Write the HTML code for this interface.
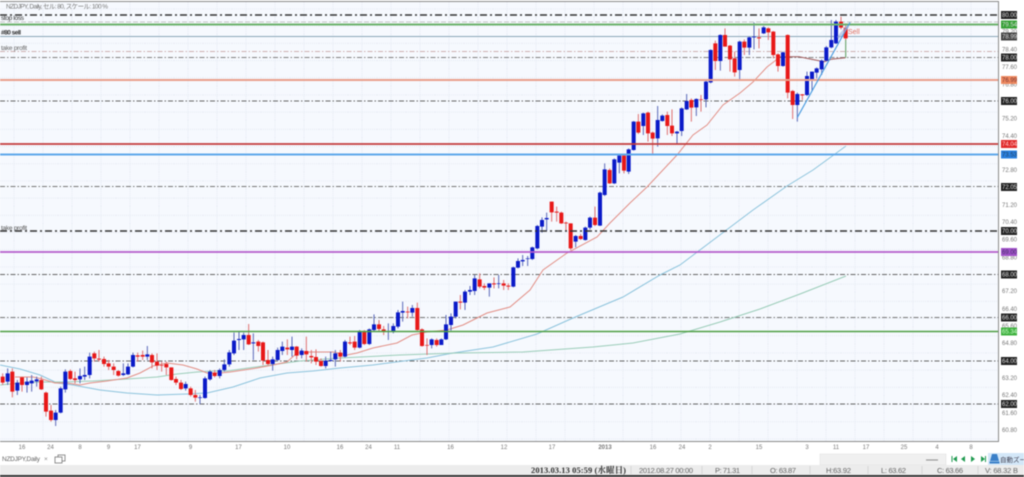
<!DOCTYPE html>
<html lang="ja"><head><meta charset="utf-8"><title>NZDJPY Daily</title>
<style>
html,body{margin:0;padding:0;background:#fff}
body{width:1024px;height:477px;overflow:hidden}
svg{display:block;filter:blur(.5px)}
text{font-family:"Liberation Sans","Noto Sans CJK JP",sans-serif}
.ax text{font-size:6px;fill:#777;text-anchor:start}
.bx text{font-size:6px;fill:#ddd}
.dt text{font-size:6px;fill:#777;text-anchor:middle}
.st text{font-size:7.5px;fill:#666}
.rb{fill:none;stroke:#e81818;stroke-width:12}
.bb{fill:none;stroke:#0a1ac8;stroke-width:12}
.rw{fill:none;stroke:#df7070;stroke-width:3}
.bw{fill:none;stroke:#5a68b8;stroke-width:3}
</style></head><body>
<svg width="1024" height="477" viewBox="0 0 1024 477" xmlns="http://www.w3.org/2000/svg">
<defs>
<pattern id="g" x="0" y="0" width="29" height="17.2" patternUnits="userSpaceOnUse">
<path d="M14 0V17.2M0 9H29" stroke="#e6eaf3" stroke-width="1" stroke-dasharray="1 1" fill="none"/>
</pattern>
</defs>
<rect width="1024" height="477" fill="#fff"/>
<rect x="0" y="1" width="998" height="440" fill="#f6f9fe"/>
<rect x="0" y="1" width="998" height="440" fill="url(#g)"/>

<!-- horizontal levels behind candles -->
<g fill="none">
<path d="M0 22H998" stroke="#c4c4c4" stroke-width="1" stroke-dasharray="5 2"/>
<path d="M0 36.5H998" stroke="#8aa6b8" stroke-width="1"/>
<path d="M0 51.5H998" stroke="#cdb0b0" stroke-width="1" stroke-dasharray="5 2 1.5 2"/>
<path d="M0 57.5H998" stroke="#808080" stroke-width="1" stroke-dasharray="5 2 1.5 2"/>
<path d="M0 101H998" stroke="#666" stroke-width="1" stroke-dasharray="5 2 1.5 2"/>
<path d="M0 186.5H998" stroke="#777" stroke-width="1" stroke-dasharray="5 2 1.5 2"/>
<path d="M0 274.5H998" stroke="#666" stroke-width="1" stroke-dasharray="5 2 1.5 2"/>
<path d="M0 317.5H998" stroke="#777" stroke-width="1" stroke-dasharray="5 2 1.5 2"/>
<path d="M0 361H998" stroke="#666" stroke-width="1" stroke-dasharray="5 2 1.5 2"/>
<path d="M0 404H998" stroke="#666" stroke-width="1" stroke-dasharray="5 2 1.5 2"/>
</g>

<!-- moving averages -->
<g fill="none" stroke-width="1">
<polyline stroke="#8cc3dc" points="0,365 20,369 40,375 57,383 73,385 100,390 127,393 157,395 187,394 207,393 233,387 260,378 287,373 313,371 340,368 373,365 427,358 453,353 493,347 537,334 573,318 623,297 660,275 680,265 753,210 787,186 813,170 846,146"/>
<polyline stroke="#9accb8" points="0,385 20,383 40,382 63,382 93,381 127,379 157,377 177,374 197,372 213,371 227,371 263,366 300,361 340,358 400,355 457,353 523,352 593,347 633,343 680,334 720,322 760,309 800,294 846,276"/>
<polyline stroke="#e28f86" points="15,377 33,377 42,379 55,383 67,383 80,385 90,383 107,381 127,378 140,373 153,366 167,363 183,365 197,369 207,373 220,373 230,372 257,368 273,365 287,362 297,353 310,352 333,352 347,355 357,353 373,348 397,343 412,335 427,332 447,330 463,325 487,313 510,307 530,290 543,270 567,253 597,237 610,223 630,203 647,187 677,155 693,135 707,125 723,105 740,93 753,82 767,67 780,57"/>
<polyline stroke="#a05a5a" points="780,57 791,56.7 799,56.7 824,61.7 831,59.3 845.5,57.7"/>
<path d="M845.7 57.7V39" stroke="#5a9a5a"/>
</g>

<!-- candles A -->
<g transform="translate(0,320) scale(.33333)">
<path class="rw" d="M8 160V195M37 145V232M66 170V215M124 170V210M138 215V290M153 255V305M211 148V180M225 155V190M283 95V125M297 90V125M312 110V140M326 120V150M341 130V165M355 150V170M413 98V125M428 92V120M456 100V145M471 100V150M485 125V155M499 125V165M514 142V182M528 170V195M543 180V210M572 200V230M586 210V245M644 150V172"/>
<path class="bw" d="M23 145V195M52 180V225M81 172V218M95 165V215M110 170V200M167 270V318M182 200V280M196 148V218M240 145V190M254 140V180M269 98V175M370 130V168M384 130V165M399 98V142M442 78V120M557 185V212M600 225V252M615 170V236M630 150V182M659 145V175M673 118V155M688 90V140"/>
<path class="rb" d="M8 170V188M37 155V215M66 172V195M124 180V208M138 218V275M153 272V300M211 153V177M225 175V180M283 100V115M297 116V119M312 117V132M326 130V140M341 140V150M355 153V167M413 106V110M428 105V110M456 105V127M471 125V137M485 135V137M499 132V142M514 142V180M528 177V188M543 188V207M572 205V225M586 225V233M644 158V168"/>
<path class="bb" d="M23 160V185M52 188V212M81 185V195M95 182V190M110 178V184M167 278V300M182 205V278M196 155V208M240 168V178M254 165V170M269 110V165M370 160V165M384 140V163M399 105V140M442 103V110M557 192V205M600 232V234M615 175V234M630 155V178M659 150V168M673 133V150M688 97V133"/>
</g>
<!-- candles B -->
<g transform="translate(200,300) scale(.33333)">
<path class="rw" d="M146 72V135M175 120V155M189 125V195M204 150V195M262 118V165M290 138V178M319 110V185M334 150V190M348 148V195M363 175V200M421 150V185M450 110V135M464 108V150M493 90V135M537 60V95M551 78V105M623 20V55M652 8V92M666 85V140M681 115V165M710 115V140"/>
<path class="bw" d="M102 98V165M117 95V150M131 98V150M160 100V180M218 170V212M233 143V182M247 125V165M276 110V170M305 145V175M377 170V205M392 155V185M406 150V200M435 120V172M479 90V145M508 85V135M522 43V95M565 70V120M580 70V100M594 30V85M608 5V65M637 15V50M695 115V145M724 115V135M738 45V120M753 40V92M767 5V55"/>
<path class="rb" d="M146 105V133M175 125V138M189 127V182M204 180V192M262 143V148M290 140V167M319 153V163M334 168V172M348 171V185M363 183V198M421 158V170M450 127V130M464 125V143M493 95V132M537 73V87M551 88V95M623 35V37M652 24V90M666 88V138M681 135V137M710 120V135"/>
<path class="bb" d="M102 122V160M117 117V120M131 105V118M160 127V130M218 178V192M233 150V180M247 140V153M276 140V150M305 152V165M377 182V198M392 180V183M406 160V178M435 125V170M479 96V143M508 88V132M522 73V90M565 94V96M580 78V95M594 37V80M608 33V38M637 24V38M695 118V135M724 118V135M738 73V118M753 50V75M767 5V50"/>
</g>
<!-- candles C -->
<g transform="translate(340,190) scale(.33333)">
<path class="rw" d="M361 315V358M419 250V295M433 280V300M462 262V295M491 270V300M505 280V300M635 35V95M650 50V95M664 65V102M678 95V125M692 100V180M722 132V150M765 50V108"/>
<path class="bw" d="M375 300V360M390 288V315M404 255V315M448 280V320M476 255V295M520 230V292M534 205V235M548 195V228M563 198V228M577 170V210M592 105V178M606 82V128M620 68V122M707 135V172M736 110V152M750 80V118M780 5V108"/>
<path class="rb" d="M361 335V338M419 268V290M433 288V293M462 280V283M491 280V287M505 287V290M635 35V67M650 65V68M664 68V100M678 98V100M692 100V175M722 138V147M765 83V105"/>
<path class="bb" d="M375 305V338M390 300V305M404 265V303M448 280V293M476 280V282M520 232V290M534 213V233M548 210V214M563 205V207M577 172V207M592 108V175M606 90V110M620 84V88M707 138V155M736 113V150M750 83V113M780 8V107"/>
</g>
<!-- candles D -->
<g transform="translate(560,20) scale(.33333)">
<path class="rw" d="M149 445V492M192 405V460M235 282V342M264 275V365M278 335V405M322 275V345M336 268V348M394 235V305M423 225V275M466 62V150M495 25V80M510 75V155M524 95V170M553 58V105M597 25V85M625 22V60M640 33V115M654 100V155M683 43V235M698 210V297M727 222V240M843 -10V28M857 10V60"/>
<path class="bw" d="M134 430V528M163 415V492M178 405V460M206 385V462M221 303V392M250 278V345M293 258V380M307 283V305M351 333V372M365 262V348M380 222V270M409 235V288M438 183V262M452 88V190M481 43V152M539 62V178M568 50V105M582 8V88M611 18V42M669 95V140M712 218V305M741 155V228M756 155V215M770 142V175M785 118V165M799 78V125M814 0V85M828 0V72"/>
<path class="rb" d="M149 450V490M192 407V452M235 305V338M264 278V340M278 338V356M322 285V318M336 317V340M394 240V263M423 238V240M466 70V123M495 45V80M510 77V118M524 115V157M553 65V83M597 52V55M625 25V37M640 35V105M654 103V138M683 45V218M698 213V255M727 223V226M843 5V23M857 23V55"/>
<path class="bb" d="M134 448V525M163 418V490M178 407V428M206 388V455M221 305V390M250 280V318M293 300V355M307 287V303M351 335V340M365 265V333M380 243V268M409 237V262M438 185V238M452 90V187M481 45V123M539 65V150M568 52V83M582 50V52M611 22V40M669 97V138M712 222V255M741 168V225M756 155V178M770 145V158M785 122V148M799 82V122M814 60V82M828 5V70"/>
</g>

<!-- strong levels above candles -->
<g fill="none">
<path d="M0 15H998" stroke="#333" stroke-width="1.6" stroke-dasharray="7 3 2 3"/>
<path d="M0 24.5H998" stroke="#6db36d" stroke-width="2"/>
<path d="M0 80H998" stroke="#e9a08c" stroke-width="2"/>
<path d="M0 144H998" stroke="#c23a3a" stroke-width="1.8"/>
<path d="M0 154.5H998" stroke="#5ea8ea" stroke-width="2"/>
<path d="M0 231H998" stroke="#333" stroke-width="1.6" stroke-dasharray="7 3 2 3"/>
<path d="M0 252H998" stroke="#b45ccc" stroke-width="1.8"/>
<path d="M0 331.5H998" stroke="#4f9f44" stroke-width="1.6"/>
<path d="M797.3 117.5L850 22.5" stroke="#4a9ce0" stroke-width="1.2"/>
<path d="M838 38L848 26" stroke="#9db0dc" stroke-width="3" opacity=".6"/>
</g>

<!-- frame -->
<path d="M0 1.5H998.5V441.5H0" fill="none" stroke="#8a8a8a" stroke-width="1"/>

<!-- chart labels -->
<text x="6" y="8.5" font-size="6.5" fill="#777" textLength="102">NZDJPY, Daily, セル: 80, スケール: 100 %</text>
<text x="1" y="20" font-size="6.5" fill="#333" textLength="23">stop loss</text>
<text x="1" y="34.5" font-size="6.5" fill="#333" font-weight="bold" textLength="20">#80 sell</text>
<text x="1" y="50" font-size="6.5" fill="#666" textLength="26">take profit</text>
<text x="1" y="230" font-size="6.5" fill="#555" textLength="26">take profit</text>
<text x="848" y="34" font-size="7" fill="#e07060">Sell</text>

<!-- price axis -->
<g class="ax">
<text x="1002" y="33.5">79.20</text><text x="1002" y="51.5">78.40</text><text x="1002" y="69">77.60</text><text x="1002" y="86.5">76.80</text>
<text x="1002" y="120.5">75.20</text><text x="1002" y="138">74.40</text><text x="1002" y="172">72.80</text><text x="1002" y="207">71.20</text>
<text x="1002" y="224">70.40</text><text x="1002" y="241.5">69.60</text><text x="1002" y="259.5">68.80</text><text x="1002" y="293">67.20</text>
<text x="1002" y="311">66.40</text><text x="1002" y="328">65.60</text><text x="1002" y="345">64.80</text><text x="1002" y="380">63.20</text>
<text x="1002" y="397">62.40</text><text x="1002" y="415">61.60</text><text x="1002" y="432">60.80</text>
</g>
<g class="bx">
<rect x="1001" y="11" width="16" height="8" fill="#222"/><text x="1002" y="17">80.00</text>
<rect x="1001" y="20.5" width="16" height="8" fill="#35a035"/><text x="1002" y="26.5">79.54</text>
<rect x="1001" y="32.5" width="16" height="8" fill="#444"/><text x="1002" y="38.5">78.99</text>
<rect x="1001" y="53.5" width="16" height="8" fill="#222"/><text x="1002" y="59.5">78.00</text>
<rect x="1001" y="76" width="16" height="8" fill="#ef8a60"/><text x="1002" y="82" style="fill:#733">76.99</text>
<rect x="1001" y="97" width="16" height="8" fill="#222"/><text x="1002" y="103">76.00</text>
<rect x="1001" y="140" width="16" height="8" fill="#e02a2a"/><text x="1002" y="146" style="fill:#fcc">74.04</text>
<rect x="1001" y="150.5" width="16" height="8" fill="#2a80e0"/><text x="1002" y="156.5" style="fill:#246">73.53</text>
<rect x="1001" y="183" width="16" height="8" fill="#222"/><text x="1002" y="189">72.05</text>
<rect x="1001" y="227" width="16" height="8" fill="#222"/><text x="1002" y="233">70.00</text>
<rect x="1001" y="248" width="16" height="8" fill="#a050c8"/><text x="1002" y="254" style="fill:#436">69.00</text>
<rect x="1001" y="270.5" width="16" height="8" fill="#222"/><text x="1002" y="276.5">68.00</text>
<rect x="1001" y="313.5" width="16" height="8" fill="#222"/><text x="1002" y="319.5">66.00</text>
<rect x="1001" y="327.5" width="16" height="8" fill="#3fb03f"/><text x="1002" y="333.5" style="fill:#cfc">65.34</text>
<rect x="1001" y="357" width="16" height="8" fill="#222"/><text x="1002" y="363">64.00</text>
<rect x="1001" y="400" width="16" height="8" fill="#222"/><text x="1002" y="406">62.00</text>
</g>

<!-- date axis -->
<g class="dt">
<text x="22" y="449">16</text><text x="50.5" y="449">24</text><text x="80" y="449">8</text><text x="108.5" y="449">9</text><text x="137.5" y="449">17</text>
<text x="190.5" y="449">9</text><text x="238.5" y="449">17</text><text x="287" y="449">10</text><text x="340" y="449">16</text><text x="368.5" y="449">24</text>
<text x="397" y="449">11</text><text x="450.5" y="449">16</text><text x="504" y="449">12</text><text x="552" y="449">17</text><text x="605" y="449" font-weight="bold">2013</text>
<text x="653" y="449">16</text><text x="682" y="449">24</text><text x="710" y="449">2</text><text x="759" y="449">15</text><text x="807" y="449">3</text>
<text x="836" y="449">11</text><text x="866" y="449">17</text><text x="904" y="449">25</text><text x="937" y="449">4</text><text x="971" y="449">8</text>
</g>

<!-- tab row -->
<text x="2" y="461" font-size="6.5" fill="#666" textLength="38">NZDJPY,Daily</text>
<text x="44" y="461" font-size="6.5" fill="#888">×</text>
<g fill="#fff" stroke="#777" stroke-width=".8"><rect x="58" y="455" width="7" height="6"/><rect x="55" y="457" width="7" height="6"/></g>
<rect x="820" y="454" width="126" height="11" fill="#f0f0f0" stroke="#ddd" stroke-width=".5"/>
<path d="M926 460H938" stroke="#999" stroke-width="1.2"/>
<g fill="#1f9a50">
<rect x="951.5" y="456" width="1" height="6"/><path d="M957 456V462L953 459Z"/>
<path d="M965 456V462L961 459Z"/>
<path d="M971 456V462L975 459Z"/>
<path d="M981 456V462L985 459Z"/><rect x="985" y="456" width="1" height="6"/>
</g>
<rect x="988" y="453" width="36" height="12" fill="#d3e7f8"/>
<path d="M992 454H997L999 461H990Z" fill="#3a7fc8"/><rect x="989.5" y="461.5" width="10" height="2" fill="#3a7fc8"/>
<text x="1000" y="462" font-size="6.5" fill="#445">自動ズーム</text>

<!-- status bar -->
<rect x="0" y="465" width="1024" height="10" fill="#ececec"/>
<rect x="0" y="475" width="1024" height="2" fill="#333"/>
<path d="M631 466V474M702 466V474M752 466V474M810 466V474M868 466V474M922 466V474M978 466V474" stroke="#d5d5d5" stroke-width="1"/>
<g class="st">
<text x="531" y="473" font-weight="bold" style="font-family:'Liberation Serif','Noto Serif CJK SC',serif;fill:#333;font-size:8.5px" textLength="95">2013.03.13 05:59 (水曜日)</text>
<text x="639" y="473" textLength="54">2012.08.27 00:00</text>
<text x="715" y="473" textLength="25">P: 71.31</text>
<text x="770" y="473" textLength="26">O: 63.87</text>
<text x="826" y="473" textLength="25">H:63.92</text>
<text x="881" y="473" textLength="25">L: 63.62</text>
<text x="937" y="473" textLength="26">C: 63.66</text>
<text x="985" y="473" textLength="33">V: 68.32 B</text>
</g>
</svg>
</body></html>
